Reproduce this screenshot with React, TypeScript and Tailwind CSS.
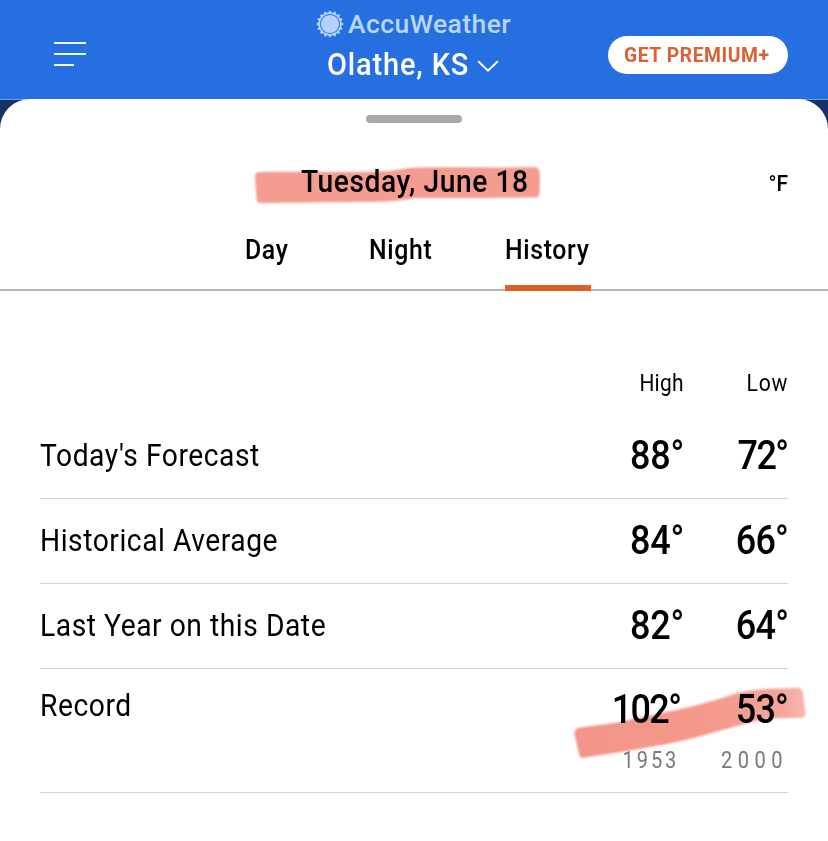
import { clsx } from "clsx";

type HistoryRow = {
  label: string;
  high: string;
  low: string;
  lowClass: string;
};

const rows: HistoryRow[] = [
  { label: "Today's Forecast", high: "88°", low: "72°", lowClass: "tracking-[-1.8px] mr-[1px]" },
  { label: "Historical Average", high: "84°", low: "66°", lowClass: "tracking-[-0.9px]" },
  { label: "Last Year on this Date", high: "82°", low: "64°", lowClass: "tracking-[-0.8px]" },
];

const tabs = [
  { name: "Day", className: "w-[44px]" },
  { name: "Night", className: "ml-[80px] w-[64px]" },
  { name: "History", className: "ml-[72px] w-[86px]" },
];

function SunLogo() {
  const teeth = 16;
  const points = Array.from({ length: teeth * 2 }, (_, i) => {
    const r = i % 2 === 0 ? 13.8 : 11.2;
    const a = (i * Math.PI) / teeth - Math.PI / 2;
    return `${(14 + r * Math.cos(a)).toFixed(2)},${(14 + r * Math.sin(a)).toFixed(2)}`;
  }).join(" ");

  return (
    <svg className="size-7 shrink-0" viewBox="0 0 28 28">
      <polygon points={points} fill="#b9d6ff" />
      <circle cx="14" cy="14" r="9.6" fill="#b4d0fc" stroke="#3f7fe6" strokeWidth="1.1" />
    </svg>
  );
}

function Header() {
  return (
    <header className="flex h-[99px] bg-[#266fe1]">
      <div className="flex w-[270px] flex-col gap-[9px] pt-[42px] pl-[54px]">
        <div className="h-[2px] w-8 bg-[#eafcff]" />
        <div className="h-[2px] w-8 bg-[#eafcff]" />
        <div className="h-[2px] w-5 bg-[#eafcff]" />
      </div>
      <div className="flex w-[288px] flex-col pt-[10px]">
        <div className="flex h-7 items-center pl-[46px]">
          <SunLogo />
          <span className="ml-[4px] text-[26.5px] leading-7 font-medium tracking-[0.42px] whitespace-nowrap text-[#b9d6ff]">
            AccuWeather
          </span>
        </div>
        <div className="mt-[11px] flex h-[32px] pl-[57px]">
          <span className="w-[150px] origin-left scale-x-[0.935] text-[31px] leading-[32px] font-medium tracking-[0.9px] whitespace-nowrap text-white">
            Olathe, KS
          </span>
          <svg className="mt-[11px] h-3 w-[22px]" viewBox="0 0 22 12" fill="none">
            <path d="M1.2 1.2 L11 10.6 L20.8 1.2" stroke="#fff" strokeWidth="2" />
          </svg>
        </div>
      </div>
      <button
        type="button"
        className="mt-9 ml-[50px] flex h-[38px] w-[180px] items-center rounded-full bg-white pl-[15.5px]"
      >
        <span className="origin-left scale-x-[0.92] text-[21px] leading-[38px] font-bold tracking-[0.6px] whitespace-nowrap text-[#da6038]">
          GET PREMIUM+
        </span>
      </button>
    </header>
  );
}

function Temp({ value, className }: { value: string; className?: string }) {
  return (
    <span
      className={clsx(
        "origin-right scale-x-[0.9] text-[40px] font-medium whitespace-nowrap",
        className
      )}
    >
      {value}
    </span>
  );
}

function RowLabel({ children }: { children: string }) {
  return (
    <span className="origin-left scale-x-[0.91] text-[31px] tracking-[0.6px] whitespace-nowrap">
      {children}
    </span>
  );
}

function Highlights() {
  return (
    <svg
      className="absolute inset-0 -z-10 h-[742px] w-[828px] blur-[0.8px]"
      viewBox="0 99 828 742"
    >
      <defs>
        <linearGradient id="marker" x1="0" x2="1" y1="0" y2="0">
          <stop offset="0" stopColor="#f39689" />
          <stop offset="0.6" stopColor="#f4998c" />
          <stop offset="0.9" stopColor="#f5a59a" />
          <stop offset="1" stopColor="#f7b8b0" />
        </linearGradient>
      </defs>
      <path
        d="M259 172 C300 171 350 173 388 171 C402 170 402 168 420 167.500 C460 167 500 168 536 167 Q540 168 540 176 L539.500 194 Q539 197.500 535 197.500 C500 198 450 198 415 198 C400 201 390 201.500 370 202 C330 202 290 203 260 203 Q257 203 256.500 199 L255 177 Q255 172.500 259 172 Z"
        fill="#f49c90"
      />
      <path
        d="M578 728 C594 725 606 725 622 721.500 C655 714 680 710 705 703 C725 698 738 691 755 690 C770 688 785 689 798 687.500 Q802 688 803 693 L805.500 712 Q806 718 801 718 C785 718 770 717 752 722 C720 730 690 741 650 747 C625 752 605 754 583 758 Q580 758.500 579 754 L574.500 735 Q574 729 578 728 Z"
        fill="url(#marker)"
      />
    </svg>
  );
}

export default function App() {
  return (
    <div className="h-[841px] w-[828px] overflow-hidden bg-[#266fe1] font-['Roboto',sans-serif] text-black">
      <Header />
      <div className="border-t border-[#6b9fec] bg-[#143468]">
        <main className="relative isolate -mt-px h-[742px] overflow-hidden rounded-t-[30px] bg-white">
          <Highlights />

          <div className="mx-auto mt-4 h-2 w-24 rounded-full bg-[#a9a9a9]" />

          <div className="mt-[39px] flex h-10 items-center justify-between pr-[40.5px] pl-[300.5px] font-medium">
            <h1 className="origin-left scale-x-[0.91] text-[31px] leading-10 tracking-[0.6px] whitespace-nowrap">
              Tuesday, June 18
            </h1>
            <span className="mt-[2px] origin-right scale-x-[0.93] text-[22.5px] leading-6">
              °F
            </span>
          </div>

          <nav className="mt-[27px] flex h-[62px] border-b-2 border-[#b5b5b5] pl-[245px]">
            {tabs.map((tab) => (
              <div
                key={tab.name}
                className={clsx(
                  "h-[62px] text-[27px] leading-[42px]",
                  tab.className,
                  tab.name === "History" && "border-b-[6px] border-[#de5e29]"
                )}
              >
                <div className="w-full origin-left scale-x-[0.92] font-medium tracking-[0.7px] whitespace-nowrap">
                  {tab.name}
                </div>
              </div>
            ))}
          </nav>

          <section className="mx-10 pt-[78px]">
            <div className="flex h-[29px] items-center text-[23px] leading-7">
              <div className="flex-1" />
              <div className="flex w-[104px] justify-end">
                <span className="origin-right scale-x-[0.91] tracking-[0.3px]">High</span>
              </div>
              <div className="flex w-[104px] justify-end">
                <span className="origin-right scale-x-[0.92] tracking-[0.8px]">Low</span>
              </div>
            </div>

            <div className="mt-[16px]">
              {rows.map((row) => (
                <div
                  key={row.label}
                  className="flex h-[85px] items-center border-b border-[#d4d4d4]"
                >
                  <div className="flex flex-1">
                    <RowLabel>{row.label}</RowLabel>
                  </div>
                  <div className="flex w-[104px] justify-end">
                    <Temp value={row.high} className="-mr-[0.5px] tracking-[-0.2px]" />
                  </div>
                  <div className="flex w-[104px] justify-end">
                    <Temp value={row.low} className={row.lowClass} />
                  </div>
                </div>
              ))}

              <div className="flex h-[124px] border-b border-[#d4d4d4]">
                <div className="flex flex-1 pt-[17px] leading-10">
                  <RowLabel>Record</RowLabel>
                </div>
                <div className="flex w-[104px] flex-col items-end pt-[21px] leading-10">
                  <Temp value="102°" className="mr-[3.5px] tracking-[-1.8px]" />
                  <span className="mt-[15px] mr-[4.5px] origin-right scale-x-[0.87] text-[23px] leading-8 tracking-[3.4px] text-[#77797d]">
                    1953
                  </span>
                </div>
                <div className="flex w-[104px] flex-col items-end pt-[21px] leading-10">
                  <Temp value="53°" className="tracking-[-0.9px]" />
                  <span className="mt-[15px] origin-right scale-x-[0.87] text-[23px] leading-8 tracking-[6.3px] text-[#77797d]">
                    2000
                  </span>
                </div>
              </div>
            </div>
          </section>
        </main>
      </div>
    </div>
  );
}
